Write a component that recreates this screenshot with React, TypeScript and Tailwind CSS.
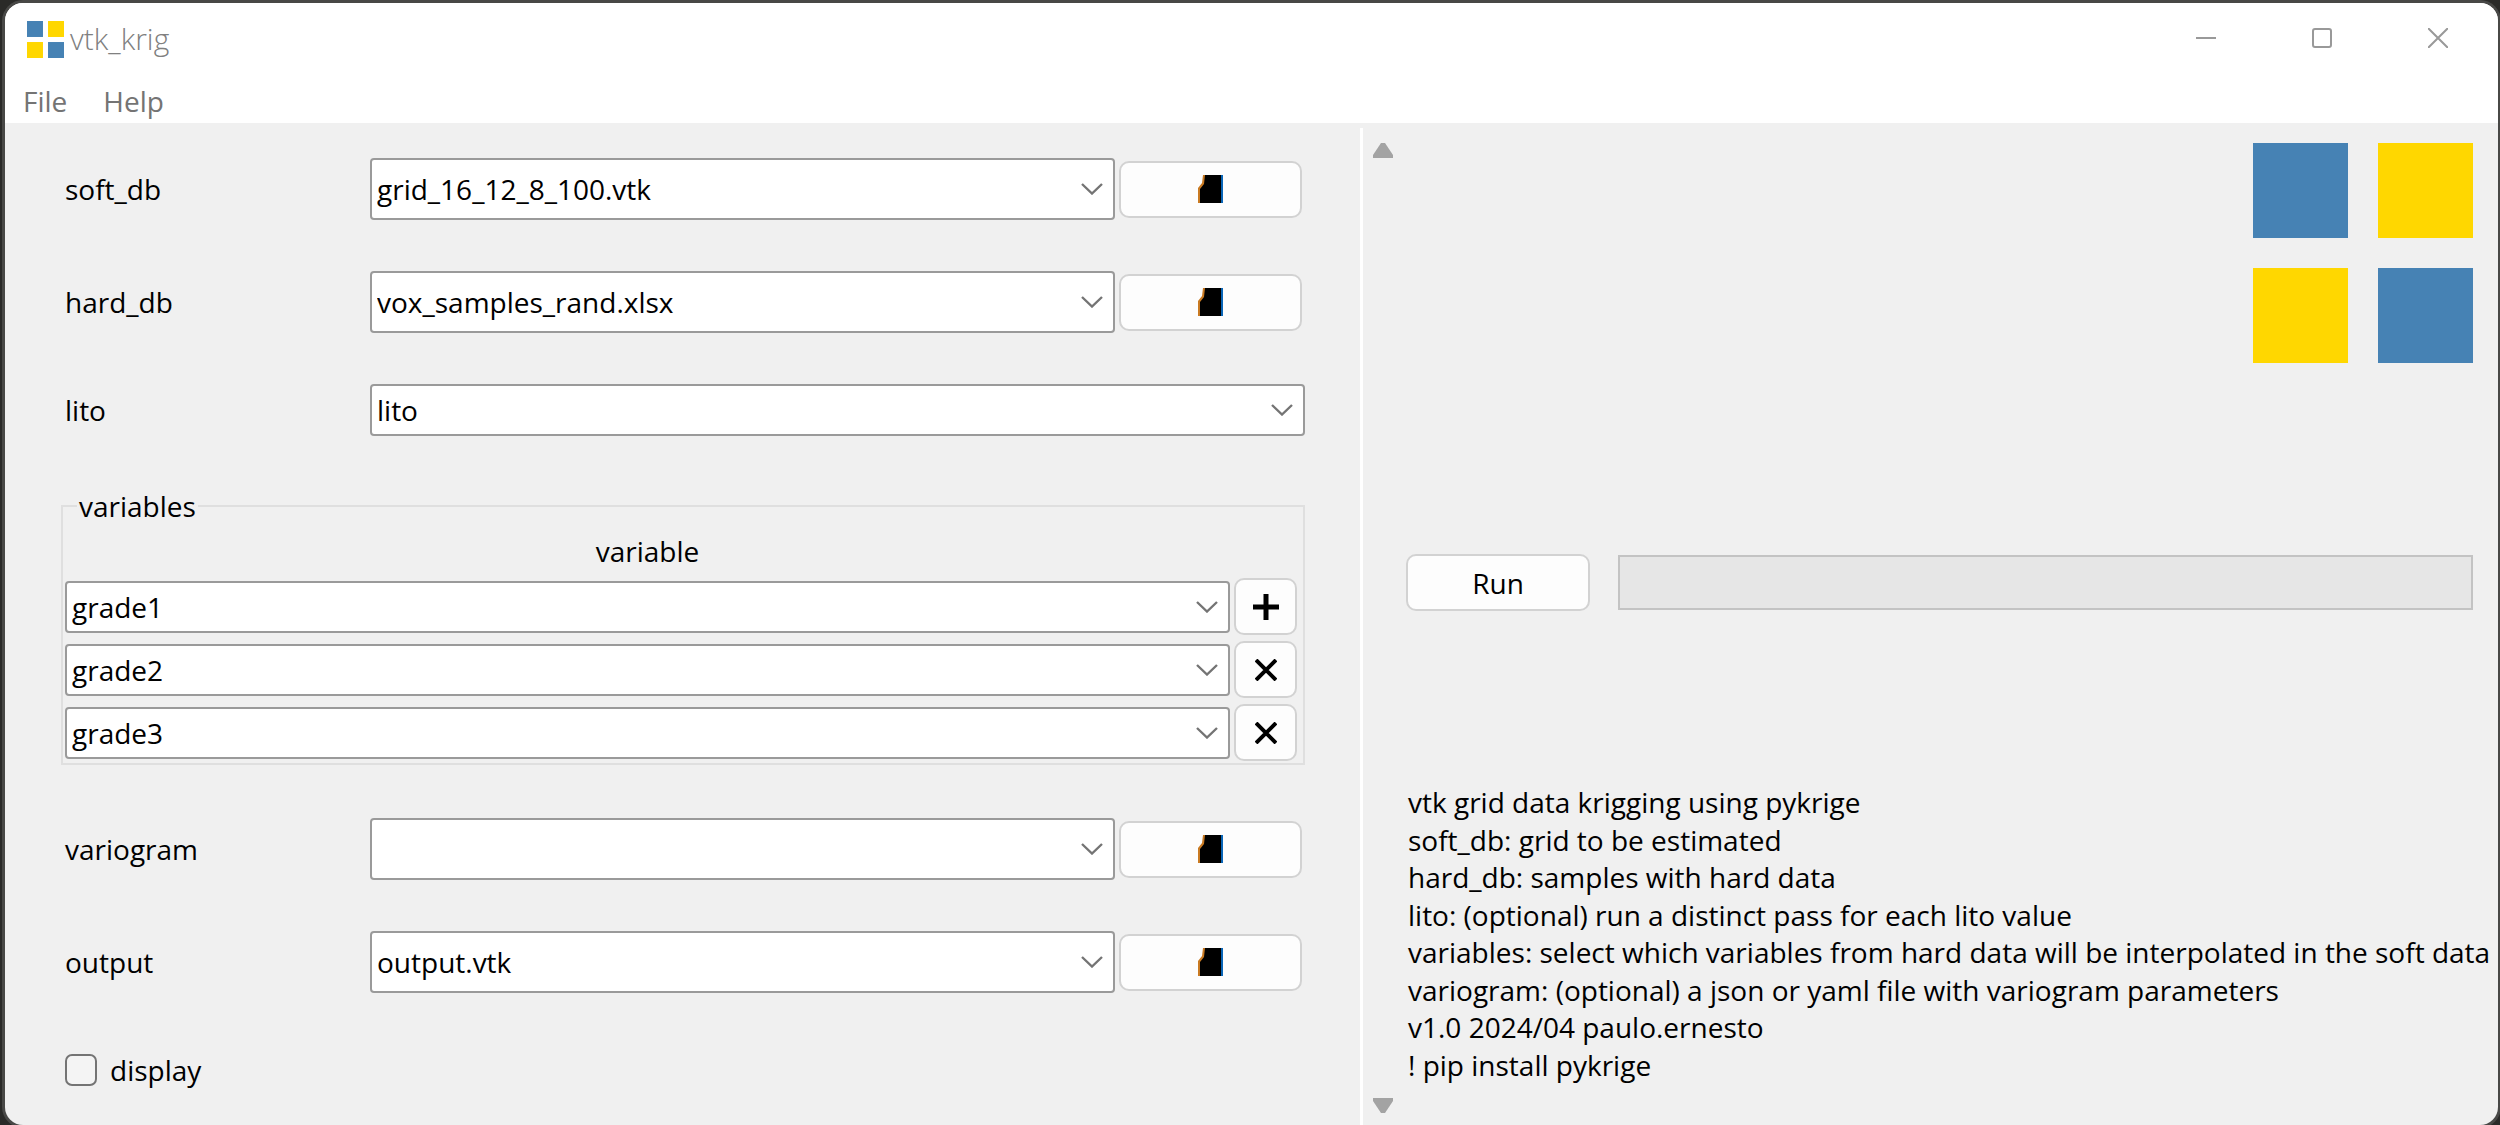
import React from "react";

function Logo({ className }: { className: string }) {
  return (
    <svg viewBox="0 0 220 220" className={className} aria-hidden="true">
      <rect x="0" y="0" width="95" height="95" fill="#4682b4" />
      <rect x="125" y="0" width="95" height="95" fill="#ffd700" />
      <rect x="0" y="125" width="95" height="95" fill="#ffd700" />
      <rect x="125" y="125" width="95" height="95" fill="#4682b4" />
    </svg>
  );
}

function FileIcon() {
  return (
    <svg width="26" height="28" viewBox="0 0 26 28" aria-hidden="true">
      <path d="M5 0H20V28H0V13L4 8Z" fill="#c97a22" />
      <path d="M18 0H25V28H18Z" fill="#0a66b8" />
      <path d="M7 0H23V28H2V14L6 9Z" fill="#000" />
    </svg>
  );
}

function PlusIcon() {
  return (
    <svg width="26" height="26" viewBox="0 0 26 26" stroke="#000" strokeWidth="5" aria-hidden="true">
      <path d="M0 13H26M13 0V26" />
    </svg>
  );
}

function CrossIcon() {
  return (
    <svg width="22" height="22" viewBox="0 0 22 22" stroke="#000" strokeWidth="4" aria-hidden="true">
      <path d="M1 1L21 21M21 1L1 21" />
    </svg>
  );
}

type ComboProps = { id: string; value: string; tall?: boolean; label?: string };

function Combo({ id, value, tall, label }: ComboProps) {
  return (
    <div className="relative min-w-0 flex-1">
      <select
        id={id}
        defaultValue={value}
        aria-label={label}
        className={`block w-full appearance-none rounded-[4px] border-2 border-[#9a9a9a] bg-white pr-10 pl-[5px] text-black ${
          tall ? "h-[62px]" : "h-[52px]"
        }`}
      >
        <option value={value}>{value}</option>
      </select>
      <svg
        viewBox="0 0 22 12"
        className="pointer-events-none absolute top-1/2 right-3 h-3 w-[22px] -translate-y-1/2"
        fill="none"
        stroke="#747474"
        strokeWidth="2.4"
        aria-hidden="true"
      >
        <path d="M1 1L11 10.5L21 1" />
      </svg>
    </div>
  );
}

const buttonLook =
  "flex h-[57px] items-center justify-center rounded-[10px] border-2 border-[#d2d2d2] bg-[#fdfdfd] text-black";

function Row({ name, value, browse }: { name: string; value: string; browse?: boolean }) {
  return (
    <div className="flex items-center pl-1">
      <label htmlFor={name} className="w-[305px] shrink-0">
        {name}
      </label>
      <Combo id={name} value={value} tall={browse} />
      {browse && (
        <button type="button" aria-label={`Browse ${name}`} className={`${buttonLook} mr-[3px] ml-1 w-[183px] shrink-0`}>
          <FileIcon />
        </button>
      )}
    </div>
  );
}

const grades = ["grade1", "grade2", "grade3"];

const description = [
  "vtk grid data krigging using pykrige",
  "soft_db: grid to be estimated",
  "hard_db: samples with hard data",
  "lito: (optional) run a distinct pass for each lito value",
  "variables: select which variables from hard data will be interpolated in the soft data",
  "variogram: (optional) a json or yaml file with variogram parameters",
  "v1.0 2024/04 paulo.ernesto",
  "! pip install pykrige",
];

function WindowButton({ label, children }: { label: string; children: React.ReactNode }) {
  return (
    <button type="button" aria-label={label} className="flex h-[70px] w-[116px] items-center justify-center">
      <svg width="20" height="20" viewBox="0 0 20 20" fill="none" stroke="#999" strokeWidth="2" aria-hidden="true">
        {children}
      </svg>
    </button>
  );
}

export default function App() {
  return (
    <div className="flex min-h-screen flex-col bg-[#2a2a28] pt-[3px] pr-[2px] pl-[5px] font-['Open_Sans',sans-serif] text-[28px] leading-[38px] text-black">
      <div className="flex flex-1 flex-col overflow-hidden rounded-[18px] bg-[#f0f0f0] ring-3 ring-[#484846]">
        <header className="bg-white">
          <div className="flex h-[70px] items-center justify-between">
            <div className="flex items-center gap-[6px] pt-[2px] pl-[22px]">
              <Logo className="size-[37px]" />
              <h1 className="text-[30px] font-light text-[#808080]">vtk_krig</h1>
            </div>
            <div className="flex pr-[2px]">
              <WindowButton label="Minimize">
                <path d="M0 10H20" />
              </WindowButton>
              <WindowButton label="Maximize">
                <rect x="1" y="1" width="18" height="18" rx="2" />
              </WindowButton>
              <WindowButton label="Close">
                <path d="M0 0L20 20M20 0L0 20" />
              </WindowButton>
            </div>
          </div>
          <nav className="flex h-[50px] items-center gap-9 pt-[6px] pl-[18px] text-[#747474]">
            <button type="button">File</button>
            <button type="button">Help</button>
          </nav>
        </header>

        <main className="grid flex-1 grid-cols-[minmax(0,1355fr)_minmax(0,1138fr)]">
          <form className="flex flex-col pt-[35px] pr-[55px] pl-[56px]">
            <div className="flex flex-col gap-[51px]">
              <Row name="soft_db" value="grid_16_12_8_100.vtk" browse />
              <Row name="hard_db" value="vox_samples_rand.xlsx" browse />
              <Row name="lito" value="lito" />
            </div>

            <fieldset className="mt-[51px] mb-[53px] min-w-0 border-2 border-[#dfdfdf] pt-[7px] pr-[6px] pb-[2px] pl-[2px]">
              <legend className="ml-3 px-[2px]">variables</legend>
              <div className="mb-2 pr-[67px] text-center">variable</div>
              <div className="flex flex-col gap-[6px]">
                {grades.map((grade, i) => (
                  <div key={grade} className="flex items-center gap-1">
                    <Combo id={grade} value={grade} label={`variable ${i + 1}`} />
                    <button
                      type="button"
                      aria-label={i === 0 ? "Add variable" : `Remove ${grade}`}
                      className={`${buttonLook} w-[63px] shrink-0`}
                    >
                      {i === 0 ? <PlusIcon /> : <CrossIcon />}
                    </button>
                  </div>
                ))}
              </div>
            </fieldset>

            <div className="flex flex-col gap-[51px]">
              <Row name="variogram" value="" browse />
              <Row name="output" value="output.vtk" browse />
            </div>

            <label className="mt-[58px] flex items-center gap-[13px] self-start pl-1">
              <input
                type="checkbox"
                className="size-8 appearance-none rounded-[7px] border-2 border-[#747474] bg-[#f4f4f4] checked:bg-[#4682b4]"
              />
              display
            </label>
          </form>

          <section className="mt-[5px] flex border-l-3 border-white pt-[15px] pr-[25px] pb-3 pl-[10px]">
            <div className="flex w-5 shrink-0 flex-col justify-between">
              <svg width="20" height="15" viewBox="0 0 20 15" fill="#a3a3a3" aria-hidden="true">
                <path d="M8 0H12L20 12V15H0V12Z" />
              </svg>
              <svg width="20" height="15" viewBox="0 0 20 15" fill="#a3a3a3" aria-hidden="true">
                <path d="M0 0H20V3L12 15H8L0 3Z" />
              </svg>
            </div>
            <div className="flex min-w-0 flex-1 flex-col pl-[13px]">
              <Logo className="size-[220px] self-end" />
              <div className="mt-[191px] flex items-center gap-7">
                <button type="button" className={`${buttonLook} w-[184px] shrink-0`}>
                  Run
                </button>
                <div
                  role="progressbar"
                  aria-label="Progress"
                  aria-valuenow={0}
                  className="h-[55px] flex-1 border-2 border-[#c3c3c3] bg-[#e6e6e6]"
                />
              </div>
              <div className="mt-[172px] grid h-[300px] grid-rows-8 pl-[2px]">
                {description.map((line) => (
                  <p key={line} className="whitespace-nowrap">
                    {line}
                  </p>
                ))}
              </div>
            </div>
          </section>
        </main>
      </div>
    </div>
  );
}
